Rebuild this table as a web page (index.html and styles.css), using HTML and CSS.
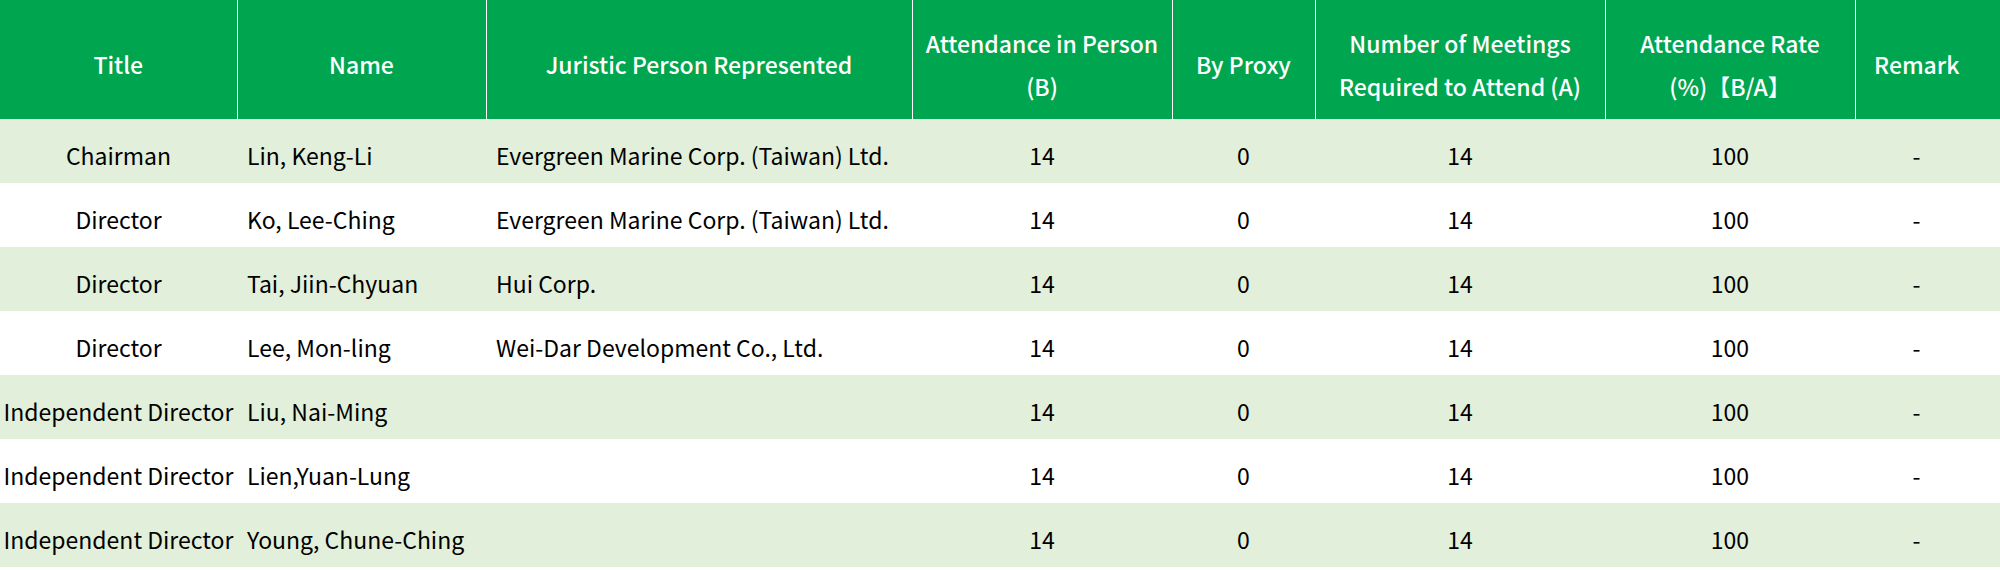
FILE: index.html
```html
<!DOCTYPE html>
<html lang="en">
<head>
<meta charset="utf-8">
<title>Board Meeting Attendance</title>
<link rel="stylesheet" href="styles.css">
</head>
<body>
<table class="attendance">
  <colgroup>
    <col class="c-title"><col class="c-name"><col class="c-juristic"><col class="c-person">
    <col class="c-proxy"><col class="c-required"><col class="c-rate"><col class="c-remark">
  </colgroup>
  <thead>
    <tr>
      <th>Title</th>
      <th>Name</th>
      <th>Juristic Person Represented</th>
      <th>Attendance in Person<br>(B)</th>
      <th>By Proxy</th>
      <th>Number of Meetings<br>Required to Attend (A)</th>
      <th>Attendance Rate<br>(%)【B/A】</th>
      <th class="remark">Remark</th>
    </tr>
  </thead>
  <tbody>
    <tr><td>Chairman</td><td class="left">Lin, Keng-Li</td><td class="left">Evergreen Marine Corp. (Taiwan) Ltd.</td><td>14</td><td>0</td><td>14</td><td>100</td><td class="remark">-</td></tr>
    <tr><td>Director</td><td class="left">Ko, Lee-Ching</td><td class="left">Evergreen Marine Corp. (Taiwan) Ltd.</td><td>14</td><td>0</td><td>14</td><td>100</td><td class="remark">-</td></tr>
    <tr><td>Director</td><td class="left">Tai, Jiin-Chyuan</td><td class="left">Hui Corp.</td><td>14</td><td>0</td><td>14</td><td>100</td><td class="remark">-</td></tr>
    <tr><td>Director</td><td class="left">Lee, Mon-ling</td><td class="left">Wei-Dar Development Co., Ltd.</td><td>14</td><td>0</td><td>14</td><td>100</td><td class="remark">-</td></tr>
    <tr><td>Independent Director</td><td class="left">Liu, Nai-Ming</td><td class="left"></td><td>14</td><td>0</td><td>14</td><td>100</td><td class="remark">-</td></tr>
    <tr><td>Independent Director</td><td class="left">Lien,Yuan-Lung</td><td class="left"></td><td>14</td><td>0</td><td>14</td><td>100</td><td class="remark">-</td></tr>
    <tr><td>Independent Director</td><td class="left">Young, Chune-Ching</td><td class="left"></td><td>14</td><td>0</td><td>14</td><td>100</td><td class="remark">-</td></tr>
  </tbody>
</table>
</body>
</html>
```
FILE: styles.css
```css
html, body {
  margin: 0;
  padding: 0;
  background: #ffffff;
}
body {
  font-family: "Noto Sans CJK TC", "Noto Sans", sans-serif;
  color: #000000;
}
.attendance {
  width: 2000px;
  border-collapse: collapse;
  table-layout: fixed;
  font-size: 23px;
}
.c-title { width: 237px; }
.c-name { width: 249px; }
.c-juristic { width: 426px; }
.c-person { width: 260px; }
.c-proxy { width: 143px; }
.c-required { width: 290px; }
.c-rate { width: 250px; }
.c-remark { width: 145px; }

.attendance th {
  background: #00a64f;
  color: #ffffff;
  font-weight: 500;
  height: 119px;
  padding: 10px 0 0 0;
  line-height: 43px;
  text-align: center;
  vertical-align: middle;
  white-space: nowrap;
  box-sizing: border-box;
}
.attendance th + th {
  border-left: 1px solid #ffffff;
}
.attendance td {
  height: 64px;
  padding: 8px 0 0 0;
  box-sizing: border-box;
  text-align: center;
  vertical-align: middle;
  white-space: nowrap;
  line-height: 30px;
}
.attendance td.left {
  text-align: left;
  padding-left: 10px;
}
.attendance .remark {
  padding-right: 22px;
}
.attendance tbody tr:nth-child(odd) td {
  background: #e2efda;
}
```
